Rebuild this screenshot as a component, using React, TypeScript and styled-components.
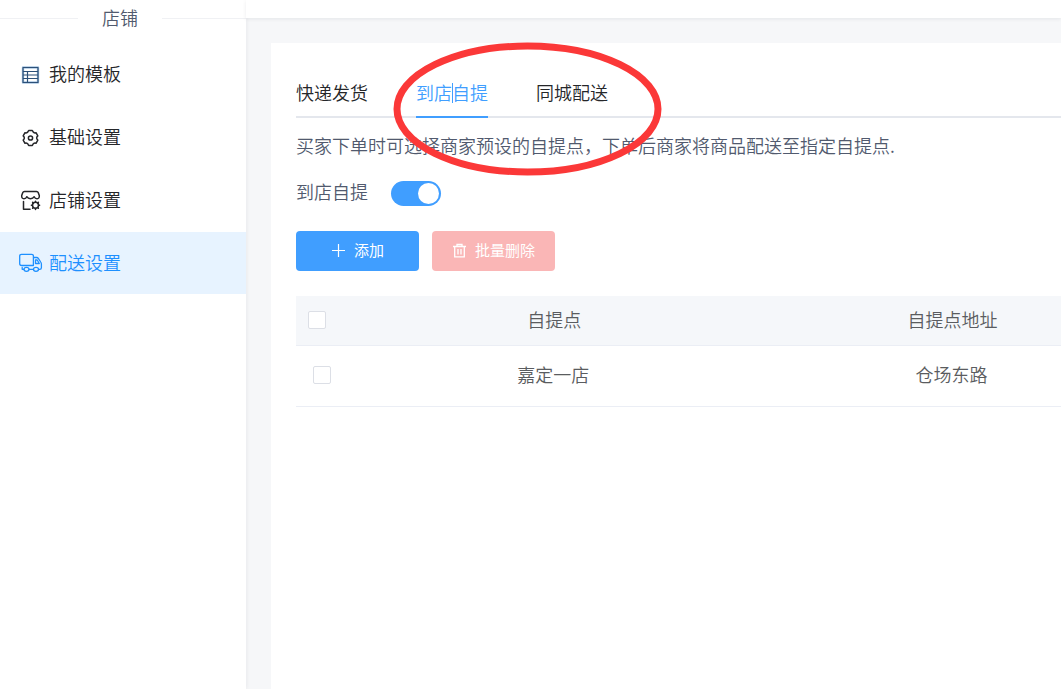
import React from "react";
import styled, { createGlobalStyle } from "styled-components";

const GlobalStyle = createGlobalStyle`
  * { box-sizing: border-box; }
  body {
    margin: 0;
    background: #f6f7f9;
    color: #515a6e;
    font-family: "Noto Sans CJK SC", sans-serif;
    font-size: 18px;
    font-weight: 350;
    line-height: 24px;
  }
`;

const Page = styled.div`
  display: flex;
  min-height: 100vh;
  overflow: hidden;
`;

const Sidebar = styled.aside`
  flex: 0 0 246px;
  background: #fff;
  box-shadow: 1px 0 4px rgba(0, 21, 41, 0.06);
`;

const SectionTitle = styled.h2`
  display: flex;
  align-items: center;
  gap: 24px;
  height: 36px;
  margin: 0 0 7px;
  font-size: 18px;
  font-weight: 350;
  line-height: 22px;
  &::before,
  &::after {
    content: "";
    height: 1px;
    background: #f0f1f4;
  }
  &::before { flex: 0 1 78px; }
  &::after { flex: 1; }
  span { padding-bottom: 2px; }
`;

const Menu = styled.nav`
  display: flex;
  flex-direction: column;
  gap: 1px;
`;

const MenuLink = styled.a<{ $active?: boolean }>`
  display: flex;
  align-items: center;
  gap: 6px;
  height: 62px;
  padding-left: 18px;
  text-decoration: none;
  color: ${(p) => (p.$active ? "#1e90ff" : "#252629")};
  background: ${(p) => (p.$active ? "#e7f3ff" : "transparent")};
  span { padding-bottom: 2px; }
`;

const MenuIcon = styled.svg`
  flex: none;
  width: 25px;
  height: 24px;
  fill: none;
  stroke: currentColor;
  stroke-linecap: round;
  stroke-linejoin: round;
`;

const Content = styled.main`
  display: flex;
  flex-direction: column;
  flex: 1;
  min-width: 0;
`;

const TopBar = styled.header`
  height: 18px;
  background: #fff;
  box-shadow: 0 1px 4px rgba(0, 21, 41, 0.08);
`;

const Panel = styled.section`
  position: relative;
  flex: 1;
  margin: 25px 0 0 25px;
  padding: 36px 0 0 25px;
  background: #fff;
`;

const Tabs = styled.div`
  display: flex;
  gap: 48px;
  height: 39px;
  border-bottom: 2px solid #e4e7ed;
`;

const Tab = styled.button<{ $active?: boolean }>`
  position: relative;
  height: 39px;
  padding: 0 0 12px;
  border: 0;
  border-bottom: 2px solid ${(p) => (p.$active ? "#409eff" : "transparent")};
  background: none;
  font: inherit;
  color: ${(p) => (p.$active ? "#409eff" : "#252629")};
`;

const Caret = styled.i`
  position: absolute;
  top: 4px;
  left: 50%;
  width: 1px;
  height: 20px;
  background: #409eff;
`;

const Hint = styled.p`
  margin: 15px 0 22px;
  white-space: nowrap;
`;

const SwitchRow = styled.div`
  display: flex;
  align-items: flex-start;
  gap: 23px;
  height: 27px;
`;

const Switch = styled.input`
  appearance: none;
  width: 50px;
  height: 25px;
  margin: 2px 0 0;
  padding: 2px 3px;
  border-radius: 13px;
  background: #dcdfe6;
  &::before {
    content: "";
    display: block;
    width: 21px;
    height: 21px;
    border-radius: 50%;
    background: #fff;
  }
  &:checked { background: #409eff; padding-right: 2px; }
  &:checked::before { margin-left: auto; }
`;

const Actions = styled.div`
  display: flex;
  gap: 13px;
  margin: 25px 0;
`;

const ActionButton = styled.button<{ $tone: string }>`
  display: flex;
  align-items: center;
  justify-content: center;
  gap: 8px;
  min-width: 123px;
  height: 40px;
  padding: 0 20px;
  border: 0;
  border-radius: 4px;
  background: ${(p) => p.$tone};
  color: #fff;
  font: inherit;
  font-size: 15px;
  font-weight: 400;
  svg {
    fill: none;
    stroke: currentColor;
  }
  span { padding-bottom: 2px; }
`;

const TableWrap = styled.div`
  overflow: hidden;
`;

const Table = styled.table`
  width: 112%;
  table-layout: fixed;
  border-collapse: separate;
  border-spacing: 0;
  color: #5a5c60;
`;

const CheckColumn = styled.col`
  width: 60px;
`;

const HeadCell = styled.th`
  height: 50px;
  padding: 0 14px 4px 12px;
  border-bottom: 1px solid #ebeef5;
  background: #f5f7fa;
  font-weight: 350;
  text-align: center;
  &:first-child {
    padding-bottom: 2px;
    text-align: left;
  }
`;

const Cell = styled.td`
  height: 61px;
  padding: 0 16px 4px 12px;
  border-bottom: 1px solid #ebeef5;
  text-align: center;
  &:first-child {
    padding: 0 0 2px 17px;
    text-align: left;
  }
`;

const Check = styled.input`
  appearance: none;
  display: block;
  width: 18px;
  height: 18px;
  margin: 0;
  border: 1px solid #dcdfe6;
  border-radius: 2px;
  background: #fff;
`;

const Highlight = styled.svg`
  position: absolute;
  top: -1px;
  left: 122px;
  width: 269px;
  height: 134px;
  pointer-events: none;
`;

const TemplateIcon = () => (
  <MenuIcon viewBox="0 0 25 24" color="#2c5078" strokeWidth="1.4" aria-hidden="true">
    <path d="M5 5.500h15v15H5z" stroke="#a9c6e2" strokeWidth="2.400" />
    <path d="M5 5.500h15v15H5zM5 9.500h15M9.500 9.500V20.500M5 13h15M5 16.500h15" strokeWidth="1.200" />
  </MenuIcon>
);

const GearIcon = () => (
  <MenuIcon viewBox="0 0 25 24" strokeWidth="1.5" aria-hidden="true">
    <path d="M10.700 5.600L14.300 5.600Q15.400 8.600 18 7.700L19.800 10.900Q17.500 13 19.800 15.100L18 18.300Q15.400 17.400 14.300 20.400L10.700 20.400Q9.600 17.400 7 18.300L5.200 15.100Q7.500 13 5.200 10.900L7 7.700Q9.600 8.600 10.700 5.600Z" />
    <circle cx="12.500" cy="13" r="2.100" />
  </MenuIcon>
);

const ShopIcon = () => (
  <MenuIcon viewBox="0 0 25 24" strokeWidth="1.5" aria-hidden="true">
    <path d="M6.500 3.500H18.500Q19.800 3.500 20.200 4.600L21.300 7.600Q21.600 10.500 19 10.700Q17 10.700 16.200 8.700Q15 10.700 12.500 10.700Q10 10.700 8.800 8.700Q8 10.700 6 10.700Q3.400 10.500 3.700 7.600L4.800 4.600Q5.200 3.500 6.500 3.500ZM5.500 13.500V21.300H12" />
    <circle cx="17.500" cy="17.300" r="3" />
    <path d="M17.500 13.200v1M17.500 20.400v1M13.400 17.300h1M20.600 17.300h1M14.600 14.400l.7.700M19.700 19.500l.7.700M20.400 14.400l-.7.700M15.300 19.500l-.7.700" />
  </MenuIcon>
);

const TruckIcon = () => (
  <MenuIcon viewBox="0 0 25 24" strokeWidth="1.3" aria-hidden="true">
    <path d="M5 14.500H3.500Q1.700 14.500 1.700 12.700V5Q1.700 3.300 3.500 3.300H13.700Q15.400 3.300 15.400 5V14.500H5M15.400 6.500H18.600Q19.700 6.500 20.300 7.400L22.700 11Q23.400 12 23.400 13.200V16.700Q23.400 18.300 21.600 18.300H20.600M15.400 18.300H11.200M5.800 18.300H4.200V16.500M17.500 9V12.500H21.300L19.200 9Z" />
    <ellipse cx="8.500" cy="18.300" rx="2.500" ry="2" />
    <ellipse cx="18" cy="18.300" rx="2.500" ry="2" />
  </MenuIcon>
);

const PlusIcon = () => (
  <svg width="15" height="16" viewBox="0 0 15 16" aria-hidden="true">
    <path d="M7.500 1v13M1 7.500h13" strokeWidth="1.200" />
  </svg>
);

const TrashIcon = () => (
  <svg width="15" height="16" viewBox="0 0 15 16" aria-hidden="true">
    <path d="M1 3.500h13M5 3.500V1.500h5V3.500M2.700 3.500v10.300h9.600V3.500M6 6v5.500M9 6v5.500" strokeWidth="1.300" />
  </svg>
);

const menu = [
  { label: "我的模板", Icon: TemplateIcon },
  { label: "基础设置", Icon: GearIcon },
  { label: "店铺设置", Icon: ShopIcon },
  { label: "配送设置", Icon: TruckIcon, active: true },
];

const points = [{ name: "嘉定一店", address: "仓场东路" }];

export default function App() {
  return (
    <>
      <GlobalStyle />
      <Page>
        <Sidebar>
          <SectionTitle><span>店铺</span></SectionTitle>
          <Menu>
            {menu.map(({ label, Icon, active }) => (
              <MenuLink key={label} href="#" $active={active}>
                <Icon />
                <span>{label}</span>
              </MenuLink>
            ))}
          </Menu>
        </Sidebar>
        <Content>
          <TopBar />
          <Panel>
            <Tabs role="tablist">
              <Tab role="tab" aria-selected={false}>快递发货</Tab>
              <Tab role="tab" aria-selected $active>
                到店自提
                <Caret />
              </Tab>
              <Tab role="tab" aria-selected={false}>同城配送</Tab>
            </Tabs>
            <Hint>买家下单时可选择商家预设的自提点，下单后商家将商品配送至指定自提点.</Hint>
            <SwitchRow>
              <label htmlFor="pickup">到店自提</label>
              <Switch id="pickup" type="checkbox" role="switch" defaultChecked />
            </SwitchRow>
            <Actions>
              <ActionButton $tone="#409eff">
                <PlusIcon />
                <span>添加</span>
              </ActionButton>
              <ActionButton $tone="#fab6b6" disabled>
                <TrashIcon />
                <span>批量删除</span>
              </ActionButton>
            </Actions>
            <TableWrap>
              <Table>
                <colgroup>
                  <CheckColumn />
                  <col />
                  <col />
                </colgroup>
                <thead>
                  <tr>
                    <HeadCell><Check type="checkbox" aria-label="全选" /></HeadCell>
                    <HeadCell>自提点</HeadCell>
                    <HeadCell>自提点地址</HeadCell>
                  </tr>
                </thead>
                <tbody>
                  {points.map((point) => (
                    <tr key={point.name}>
                      <Cell><Check type="checkbox" aria-label={point.name} /></Cell>
                      <Cell>{point.name}</Cell>
                      <Cell>{point.address}</Cell>
                    </tr>
                  ))}
                </tbody>
              </Table>
            </TableWrap>
            <Highlight viewBox="0 0 269 134" aria-hidden="true">
              <ellipse cx="134.500" cy="67" rx="130.500" ry="63" fill="none" stroke="#fb3838" strokeWidth="7" />
            </Highlight>
          </Panel>
        </Content>
      </Page>
    </>
  );
}
